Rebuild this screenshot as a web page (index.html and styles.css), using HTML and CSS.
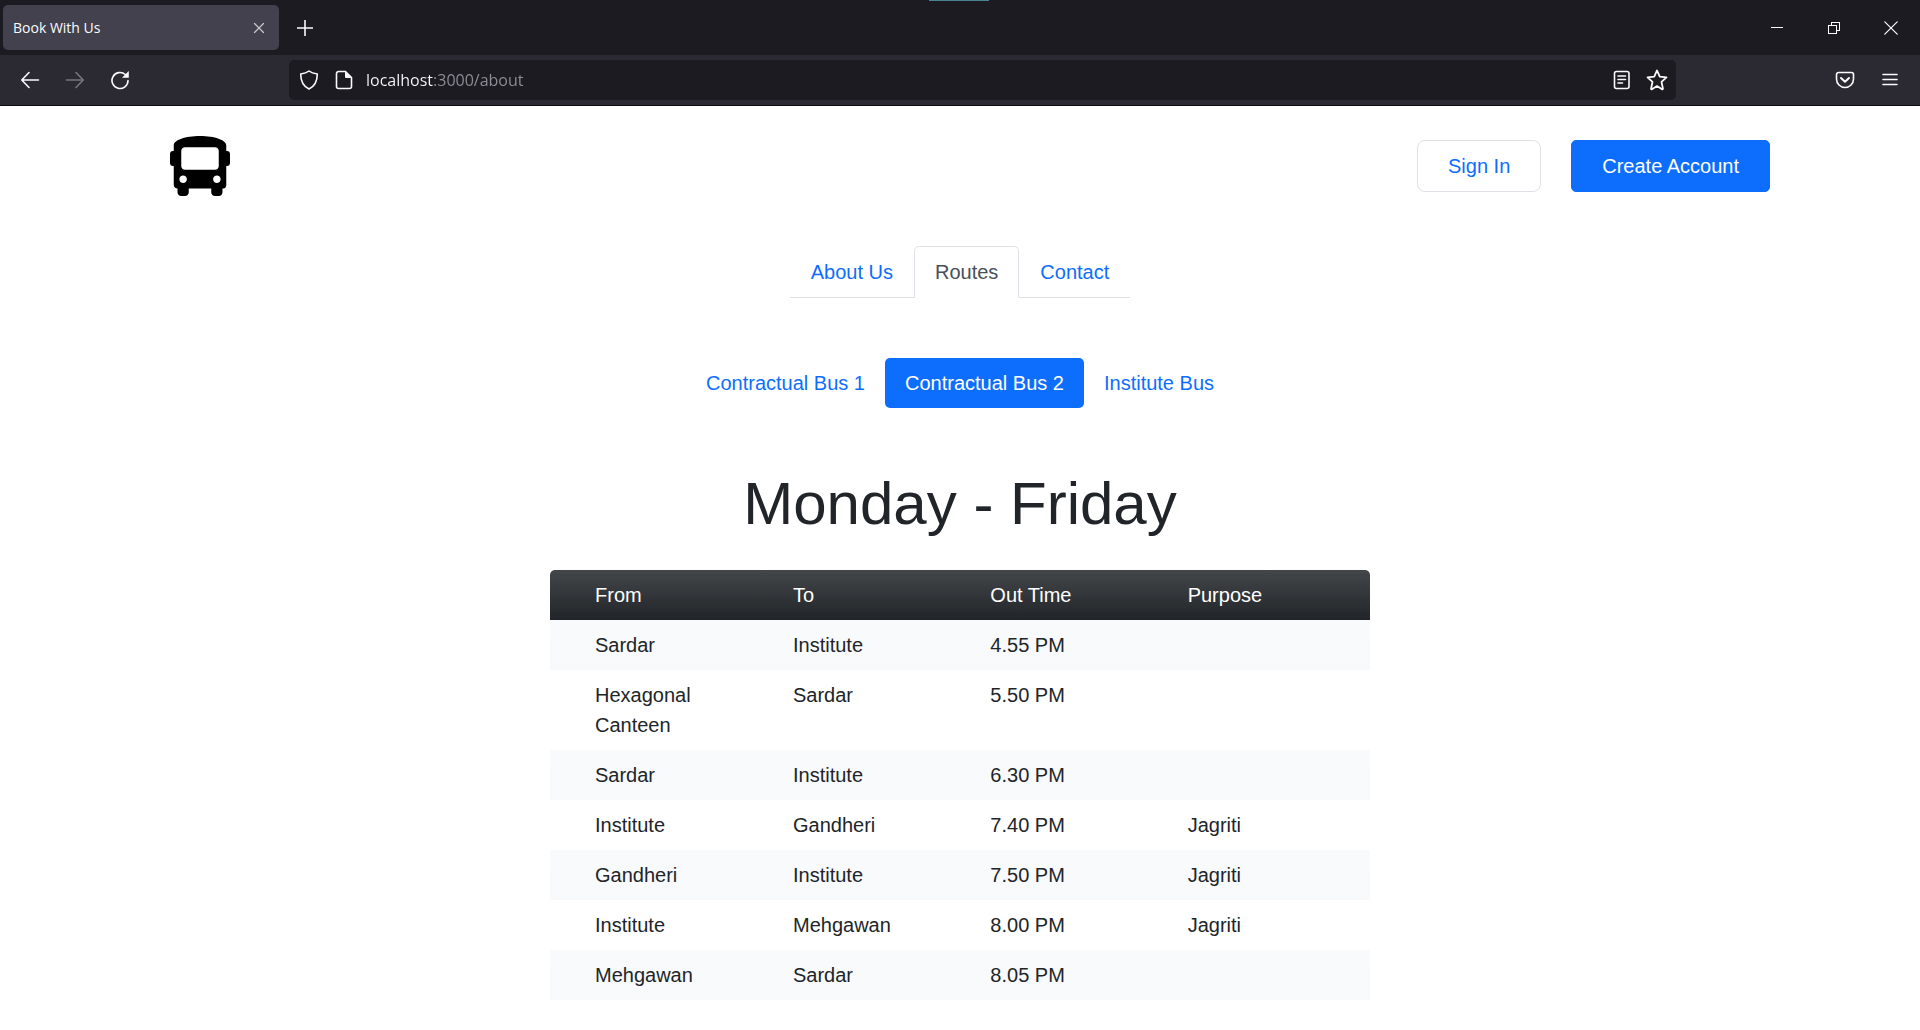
FILE: index.html
```html
<!DOCTYPE html>
<html lang="en">
<head>
<meta charset="utf-8">
<meta name="viewport" content="width=device-width, initial-scale=1">
<title>Book With Us</title>
<link rel="stylesheet" href="styles.css">
</head>
<body>
<div class="browser">
  <div class="tab-strip">
    <div class="tab">
      <span class="tab-title">Book With Us</span>
      <button class="icon-btn tab-close" type="button" aria-label="Close tab"><svg width="12" height="12" viewBox="0 0 12 12"><path d="M1.500 1.500l9 9m0-9l-9 9"/></svg></button>
    </div>
    <button class="icon-btn" type="button" aria-label="New tab"><svg width="16" height="16" viewBox="0 0 16 16"><path d="M8 .5v15M.5 8h15" stroke-width="1.600"/></svg></button>
    <span class="drag-mark"></span>
    <div class="window-controls">
      <button class="icon-btn" type="button" aria-label="Minimize"><svg width="14" height="14" viewBox="0 0 14 14"><path d="M1 6.500h12" shape-rendering="crispEdges" stroke-width="1"/></svg></button>
      <button class="icon-btn" type="button" aria-label="Restore"><svg width="14" height="14" viewBox="0 0 14 14"><path d="M1.500 4.500h8v8h-8zM4.500 4.500v-3h8v8h-3" shape-rendering="crispEdges" stroke-width="1"/></svg></button>
      <button class="icon-btn" type="button" aria-label="Close window"><svg width="14" height="14" viewBox="0 0 14 14"><path d="M.8.8l12.400 12.400m0-12.400L.8 13.200" stroke-width="1.200"/></svg></button>
    </div>
  </div>
  <div class="toolbar">
    <div class="nav-buttons">
      <button class="icon-btn" type="button" aria-label="Back"><svg width="20" height="20" viewBox="0 0 20 20"><path d="M18.500 10H2m7-7.500L1.800 10 9 17.500"/></svg></button>
      <button class="icon-btn dim" type="button" aria-label="Forward" disabled><svg width="20" height="20" viewBox="0 0 20 20"><path d="M1.500 10H18m-7-7.500l7.200 7.500-7.200 7.500"/></svg></button>
      <button class="icon-btn" type="button" aria-label="Reload"><svg width="20" height="20" viewBox="0 0 20 20"><path d="M18 10.500a8 8 0 1 1-2.700-6"/><path class="solid" d="M18.800 1v6.200a.6.600 0 0 1-.6.600H12z"/></svg></button>
    </div>
    <div class="address-bar">
      <button class="icon-btn" type="button" aria-label="Tracking protection"><svg width="20" height="20" viewBox="0 0 20 20"><path d="M10 1C7.500 3 4.500 3.600 1.700 4c0 7 2 12 8.300 15 6.300-3 8.300-8 8.300-15C15.500 3.600 12.500 3 10 1z"/></svg></button>
      <button class="icon-btn" type="button" aria-label="Site information"><svg width="20" height="20" viewBox="0 0 20 20"><path d="M4.500 1.500h7l6 6v9a2 2 0 0 1-2 2h-11a2 2 0 0 1-2-2v-13a2 2 0 0 1 2-2z"/><path class="solid" d="M11 1.500v5.500a1 1 0 0 0 1 1h5.500z"/></svg></button>
      <input class="address" type="text" aria-label="Address" value="localhost:3000/about" spellcheck="false">
      <button class="icon-btn" type="button" aria-label="Reader view"><svg width="20" height="20" viewBox="0 0 20 20"><rect x="2.500" y="1.500" width="14.500" height="17" rx="2"/><path d="M6 6h7.500M6 9.500h7.500M6 13h4.500"/></svg></button>
      <button class="icon-btn" type="button" aria-label="Bookmark this page"><svg width="22" height="22" viewBox="0 0 20 20"><path d="M10 1.300l2.500 5.600 6.100.7-4.500 4.200 1.300 6.100a.5.500 0 0 1-.8.500L10 15.500l-4.600 2.900a.5.500 0 0 1-.8-.5l1.300-6.100L1.400 7.600l6.100-.7z"/></svg></button>
    </div>
    <div class="menu-buttons">
      <button class="icon-btn" type="button" aria-label="Save to Pocket"><svg width="20" height="20" viewBox="0 0 20 20"><path d="M3.500 2.500h13a2 2 0 0 1 2 2V9a8.500 8.500 0 0 1-17 0V4.500a2 2 0 0 1 2-2z"/><path d="M6 8l4 3.800L14 8" stroke-width="2"/></svg></button>
      <button class="icon-btn" type="button" aria-label="Application menu"><svg width="20" height="20" viewBox="0 0 20 20"><path d="M3 4.500h14M3 9.500h14M3 14.500h14"/></svg></button>
    </div>
  </div>
</div>

<header class="site-header">
  <a class="brand" href="#" aria-label="Home"><svg width="60" height="60" viewBox="0 0 512 512"><path d="M488 128h-8V80c0-44.800-99.200-80-224-80S32 35.200 32 80v48h-8c-13.250 0-24 10.740-24 24v80c0 13.250 10.750 24 24 24h8v160c0 17.670 14.330 32 32 32v32c0 17.670 14.330 32 32 32h32c17.670 0 32-14.330 32-32v-32h192v32c0 17.670 14.330 32 32 32h32c17.670 0 32-14.330 32-32v-32h6.400c16 0 25.600-12.800 25.600-25.600V256h8c13.250 0 24-10.750 24-24v-80c0-13.260-10.750-24-24-24zM112 400c-17.670 0-32-14.330-32-32s14.330-32 32-32 32 14.330 32 32-14.330 32-32 32zm16-112c-17.670 0-32-14.330-32-32V128c0-17.670 14.330-32 32-32h256c17.670 0 32 14.330 32 32v128c0 17.670-14.330 32-32 32H128zm272 112c-17.670 0-32-14.330-32-32s14.330-32 32-32 32 14.330 32 32-14.330 32-32 32z"/></svg></a>
  <div class="account">
    <button class="btn btn-outline" type="button">Sign In</button>
    <button class="btn btn-primary" type="button">Create Account</button>
  </div>
</header>

<main class="content">
  <nav class="tabs" aria-label="Sections">
    <a class="tab-link" href="#about">About Us</a>
    <a class="tab-link active" href="#routes" aria-current="page">Routes</a>
    <a class="tab-link" href="#contact">Contact</a>
  </nav>
  <nav class="pills" aria-label="Buses">
    <a class="pill" href="#bus1">Contractual Bus 1</a>
    <a class="pill active" href="#bus2" aria-current="true">Contractual Bus 2</a>
    <a class="pill" href="#institute">Institute Bus</a>
  </nav>
  <h1 class="title">Monday - Friday</h1>
  <table class="schedule">
    <thead>
      <tr><th scope="col">From</th><th scope="col">To</th><th scope="col">Out Time</th><th scope="col">Purpose</th></tr>
    </thead>
    <tbody>
      <tr><td>Sardar</td><td>Institute</td><td>4.55 PM</td><td></td></tr>
      <tr><td>Hexagonal Canteen</td><td>Sardar</td><td>5.50 PM</td><td></td></tr>
      <tr><td>Sardar</td><td>Institute</td><td>6.30 PM</td><td></td></tr>
      <tr><td>Institute</td><td>Gandheri</td><td>7.40 PM</td><td>Jagriti</td></tr>
      <tr><td>Gandheri</td><td>Institute</td><td>7.50 PM</td><td>Jagriti</td></tr>
      <tr><td>Institute</td><td>Mehgawan</td><td>8.00 PM</td><td>Jagriti</td></tr>
      <tr><td>Mehgawan</td><td>Sardar</td><td>8.05 PM</td><td></td></tr>
    </tbody>
  </table>
</main>
</body>
</html>
```
FILE: styles.css
```css
* {
  box-sizing: border-box;
}

body {
  margin: 0;
  background: #fff;
  color: #212529;
  font: 20px/30px "Liberation Sans", Arial, sans-serif;
}

button,
input {
  font: inherit;
}

/* Browser frame */
.browser {
  border-bottom: 1px solid #0c0c0d;
  background: #2b2a33;
  color: #fbfbfe;
  font: 14px/20px "Open Sans", "Noto Sans", sans-serif;
}

.tab-strip {
  position: relative;
  display: flex;
  align-items: center;
  gap: 11px;
  height: 55px;
  padding: 0 14px 0 3px;
  background: #1c1b22;
}

.tab {
  display: flex;
  align-items: center;
  justify-content: space-between;
  width: 276px;
  height: 45px;
  padding: 0 5px 0 10px;
  border-radius: 5px;
  background: #42414d;
}

.drag-mark {
  position: absolute;
  top: 0;
  left: 50%;
  width: 60px;
  height: 1px;
  margin-left: -31px;
  background: #4a8291;
}

.window-controls {
  display: flex;
  gap: 27px;
  margin-left: auto;
}

.icon-btn {
  display: flex;
  flex: none;
  align-items: center;
  justify-content: center;
  width: 30px;
  height: 30px;
  padding: 0;
  border: 0;
  background: none;
  color: inherit;
}

.icon-btn svg {
  fill: none;
  stroke: currentColor;
  stroke-width: 1.6;
  stroke-linecap: round;
  stroke-linejoin: round;
}

.icon-btn .solid {
  fill: currentColor;
  stroke: none;
}

.tab-close {
  color: #c8c8cf;
}

.tab-close svg {
  stroke-width: 1.2;
}

.dim {
  color: #77767e;
}

.toolbar {
  display: flex;
  align-items: center;
  height: 50px;
  padding: 0 15px;
}

.nav-buttons,
.menu-buttons {
  display: flex;
  gap: 15px;
}

.address-bar {
  display: flex;
  flex: 1;
  align-items: center;
  gap: 5px;
  height: 40px;
  margin: 0 154px;
  padding: 0 4px 0 5px;
  border-radius: 5px;
  background: #1c1b22;
}

.address {
  flex: 1;
  min-width: 0;
  height: 30px;
  padding: 0 2px;
  border: 0;
  outline: 0;
  background: linear-gradient(90deg, #fbfbfe 69px, #8f8f98 69px) text;
  color: #8f8f98;
  font-size: 16px;
  -webkit-text-fill-color: transparent;
}

/* Site header */
.site-header {
  display: flex;
  align-items: center;
  justify-content: space-between;
  padding: 30px 150px 30px 170px;
}

.brand {
  display: flex;
  color: #000;
}

.brand svg {
  fill: currentColor;
}

.account {
  display: flex;
  gap: 30px;
}

.btn {
  padding: 10px 30px;
  border: 1px solid transparent;
  border-radius: 5px;
}

.btn-outline {
  border-color: #dee2e6;
  border-radius: 8px;
  background: #fff;
  color: #0d6efd;
}

.btn-primary {
  border-color: #0d6efd;
  background: #0d6efd;
  color: #fff;
}

/* Routes page */
.content {
  display: flex;
  flex-direction: column;
  align-items: center;
  padding: 20px 30px 30px;
}

.tabs {
  display: flex;
  border-bottom: 1px solid #dee2e6;
}

.tab-link {
  margin-bottom: -1px;
  padding: 10px 20px;
  border: 1px solid transparent;
  border-radius: 5px 5px 0 0;
  color: #0d6efd;
  text-decoration: none;
}

.tab-link.active {
  border-color: #dee2e6 #dee2e6 #fff;
  background: #fff;
  color: #495057;
}

.pills {
  display: flex;
  margin-top: 60px;
}

.pill {
  padding: 10px 20px;
  border-radius: 5px;
  color: #0d6efd;
  text-decoration: none;
}

.pill.active {
  background: #0d6efd;
  color: #fff;
}

.title {
  margin: 60px 0 30px;
  font-size: 60px;
  font-weight: 400;
  line-height: 72px;
}

.schedule {
  width: 100%;
  max-width: 820px;
  table-layout: fixed;
  border-spacing: 0;
  border-radius: 5px 5px 0 0;
  overflow: hidden;
}

.schedule th,
.schedule td {
  padding: 10px 15px;
  font-weight: 400;
  text-align: left;
  vertical-align: top;
}

.schedule th:first-child {
  width: 228px;
}

.schedule th:first-child,
.schedule td:first-child {
  padding-left: 45px;
}

.schedule td {
  height: 50px;
}

.schedule thead tr {
  background: linear-gradient(#43474a, #212529);
  color: #fff;
}

.schedule tbody tr:nth-child(odd) {
  background: linear-gradient(#f9fafb, #f8f9fa);
}
```
